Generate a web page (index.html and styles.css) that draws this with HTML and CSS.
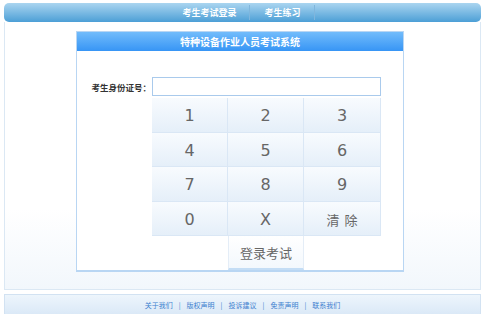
FILE: index.html
```html
<!DOCTYPE html>
<html>
<head>
    <meta charset="utf-8">
    <title>特种设备作业人员考试系统</title>
    <link rel="stylesheet" href="styles.css">
</head>
<body>
    <div class="nav">
        <a class="nav-item">考生考试登录</a>
        <a class="nav-item">考生练习</a>
    </div>

    <div class="main">
        <div class="panel">
            <div class="panel-title">特种设备作业人员考试系统</div>
            <div class="form">
                <label class="label">考生身份证号：</label>
                <input class="id-input" type="text">
                <div class="keypad">
                    <div class="key">1</div>
                    <div class="key">2</div>
                    <div class="key">3</div>
                    <div class="key">4</div>
                    <div class="key">5</div>
                    <div class="key">6</div>
                    <div class="key">7</div>
                    <div class="key">8</div>
                    <div class="key">9</div>
                    <div class="key">0</div>
                    <div class="key">X</div>
                    <div class="key key-clear">清 除</div>
                    <div class="key-login">登录考试</div>
                </div>
            </div>
        </div>
    </div>

    <div class="footer">
        <a>关于我们</a><span class="sep">|</span><a>版权声明</a><span class="sep">|</span><a>投诉建议</a><span class="sep">|</span><a>免责声明</a><span class="sep">|</span><a>联系我们</a>
    </div>
</body>
</html>
```

FILE: styles.css
```css
body {
    margin: 0;
    padding: 3px 3px 0 4px;
    background: #fff;
    font-family: "Noto Sans CJK SC", "DejaVu Sans", sans-serif;
}

.nav {
    height: 19px;
    display: flex;
    justify-content: center;
    align-items: center;
    background: linear-gradient(#aad5f0, #4c9fd6);
    border-radius: 5px;
}

.nav-item {
    font-size: 9px;
    font-weight: bold;
    color: #fff;
    line-height: 15px;
    padding: 0 12px;
    border-right: 1px solid #7fb6dd;
}

.nav-item + .nav-item {
    padding: 0 13px 0 15px;
}

.main {
    height: 268px;
    border: 1px solid #dbe8f4;
    border-top: none;
    background: linear-gradient(#fff 70%, #f2f7fc);
    padding-top: 9px;
    box-sizing: border-box;
}

.panel {
    width: 328px;
    height: 241px;
    margin-left: 71px;
    border: 1px solid #b9d6f3;
    border-bottom-width: 2px;
    box-sizing: border-box;
    background: #fff;
}

.panel-title {
    height: 19px;
    background: linear-gradient(#72bcfb, #3795f5);
    color: #fff;
    font-size: 10px;
    font-weight: bold;
    text-align: center;
    line-height: 19px;
}

.form {
    display: grid;
    grid-template-columns: 75px 229px;
    align-items: center;
    padding-top: 26px;
}

.label {
    font-size: 8.5px;
    font-weight: bold;
    color: #333;
    text-align: right;
    padding-right: 1px;
}

.id-input {
    height: 19px;
    margin: 0;
    padding: 0;
    border: 1px solid #a9caec;
    box-sizing: border-box;
}

.keypad {
    grid-column: 2;
    display: grid;
    grid-template-columns: 76px 76px 77px;
    grid-template-rows: repeat(4, 34.5px) 34px;
    margin-top: 2px;
}

.key {
    display: flex;
    justify-content: center;
    align-items: center;
    padding-top: 2px;
    background: linear-gradient(#f8fbfe, #e5eff9);
    border-right: 1px solid #dae7f5;
    border-bottom: 1px solid #dae7f5;
    box-sizing: border-box;
    font-family: "DejaVu Sans", sans-serif;
    font-size: 16px;
    color: #666;
}

.key-clear {
    font-family: "Noto Sans CJK SC", sans-serif;
    font-size: 13px;
    word-spacing: 2px;
}

.key-login {
    grid-column: 2;
    display: flex;
    justify-content: center;
    align-items: center;
    border-left: 1px solid #e4edf7;
    border-right: 1px solid #e4edf7;
    border-bottom: 2px solid #c4ddf5;
    background: linear-gradient(#fff, #f3f8fd);
    font-size: 13px;
    color: #666;
}

.footer {
    margin-top: 4px;
    height: 19px;
    border: 1px solid #d2e2f2;
    border-bottom: none;
    background: linear-gradient(#edf5fc, #dbe9f7);
    display: flex;
    justify-content: center;
    align-items: center;
    font-size: 7px;
    color: #3d7fcf;
}

.sep {
    margin: 0 6px;
    color: #3d7fcf;
}
```
